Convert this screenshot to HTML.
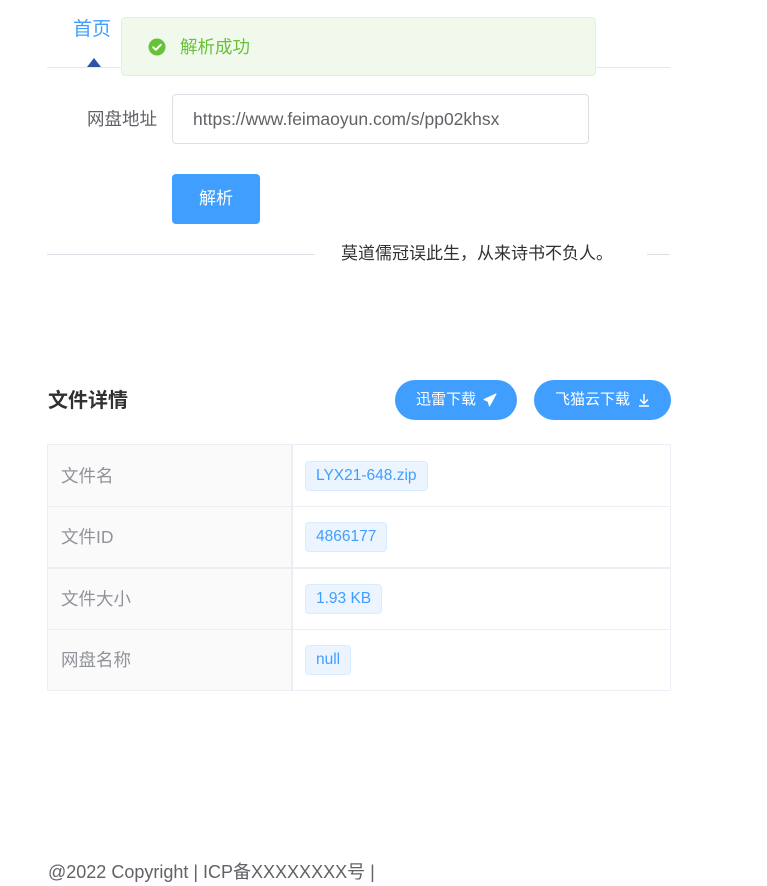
<!DOCTYPE html>
<html><head><meta charset="utf-8"><style>
*{margin:0;padding:0;box-sizing:border-box}
body{width:767px;height:886px;background:#fff;position:relative;overflow:hidden;font-family:"Liberation Sans","Noto Sans CJK SC",sans-serif}
.a{position:absolute;white-space:nowrap}
.tag{position:absolute;left:305px;height:30px;line-height:28px;padding:0 10px;background:#ecf5ff;border:1px solid #d9ecff;border-radius:4px;color:#409eff;font-size:15.5px}
.lbl{position:absolute;left:61px;font-size:17.5px;color:#909399;line-height:24px}
</style></head><body>
<div class="a" style="left:73px;top:17px;font-size:19px;color:#409eff;line-height:26px">首页</div>
<div class="a" style="left:87px;top:58px;width:0;height:0;border-left:7px solid transparent;border-right:7px solid transparent;border-bottom:9px solid #2a55a5"></div>
<div class="a" style="left:47px;top:67px;width:623px;height:1px;background:#e4e7ed"></div>
<div class="a" style="left:121px;top:17px;width:475px;height:59px;background:#f0f9eb;border:1px solid #e1f3d8;border-radius:4px"></div>
<svg class="a" style="left:148px;top:38px" width="18" height="18" viewBox="0 0 18 18"><circle cx="9" cy="9" r="8.5" fill="#67c23a"/><path d="M5.2 9.3l2.6 2.5 5-5" stroke="#fff" stroke-width="2" fill="none" stroke-linecap="round" stroke-linejoin="round"/></svg>
<div class="a" style="left:180px;top:35px;font-size:17.5px;color:#67c23a;line-height:24px">解析成功</div>

<div class="a" style="left:87px;top:107px;font-size:17.5px;color:#606266;line-height:24px">网盘地址</div>
<div class="a" style="left:172px;top:94px;width:417px;height:50px;border:1px solid #dcdfe6;border-radius:4px;font-size:17.5px;color:#606266;padding-left:20px;line-height:48px">https://www.feimaoyun.com/s/pp02khsx</div>
<div class="a" style="left:172px;top:174px;width:88px;height:50px;background:#409eff;border-radius:4px;color:#fff;font-size:17px;text-align:center;line-height:50px">解析</div>

<div class="a" style="left:47px;top:254px;width:268px;height:1px;background:#dcdfe6"></div>
<div class="a" style="left:341px;top:243px;font-size:17px;color:#303133;line-height:22px">莫道儒冠误此生，从来诗书不负人。</div>
<div class="a" style="left:647px;top:254px;width:23px;height:1px;background:#dcdfe6"></div>

<div class="a" style="left:48px;top:388px;font-size:20px;font-weight:bold;color:#303133;line-height:26px">文件详情</div>
<div class="a" style="left:395px;top:380px;width:122px;height:40px;background:#409eff;border-radius:20px;color:#fff;font-size:15px;line-height:40px;padding-left:21px">迅雷下载
<svg style="position:absolute;left:88px;top:13px" width="14" height="14" viewBox="0 0 14 14"><path d="M13 1L1 6.5l4 1.8L6.5 13z M5 8.3L13 1" fill="#fff" stroke="#fff" stroke-width="1" stroke-linejoin="round"/></svg></div>
<div class="a" style="left:534px;top:380px;width:137px;height:40px;background:#409eff;border-radius:20px;color:#fff;font-size:15px;line-height:40px;padding-left:21px">飞猫云下载
<svg style="position:absolute;left:104px;top:13px" width="12" height="14" viewBox="0 0 12 14"><path d="M6 1v9M2 6.5L6 10.5l4-4M1 13h10" stroke="#fff" stroke-width="1.4" fill="none"/></svg></div>

<div class="a" style="left:47px;top:444px;width:624px;height:247px;border:1px solid #ebeef5"></div>
<div class="a" style="left:48px;top:445px;width:243px;height:245px;background:#fafafa"></div>
<div class="a" style="left:291px;top:445px;width:2px;height:245px;background:#ebeef5"></div>
<div class="a" style="left:48px;top:506px;width:622px;height:1px;background:#ebeef5"></div>
<div class="a" style="left:48px;top:567px;width:622px;height:2px;background:#ebeef5"></div>
<div class="a" style="left:48px;top:629px;width:622px;height:1px;background:#ebeef5"></div>
<div class="lbl" style="top:464px">文件名</div>
<div class="lbl" style="top:525px">文件ID</div>
<div class="lbl" style="top:587px">文件大小</div>
<div class="lbl" style="top:648px">网盘名称</div>
<div class="tag" style="top:461px">LYX21-648.zip</div>
<div class="tag" style="top:522px">4866177</div>
<div class="tag" style="top:584px">1.93 KB</div>
<div class="tag" style="top:645px">null</div>

<div class="a" style="left:48px;top:860px;font-size:18px;color:#606266;line-height:24px">@2022 Copyright | ICP备XXXXXXXX号 |</div>
</body></html>
